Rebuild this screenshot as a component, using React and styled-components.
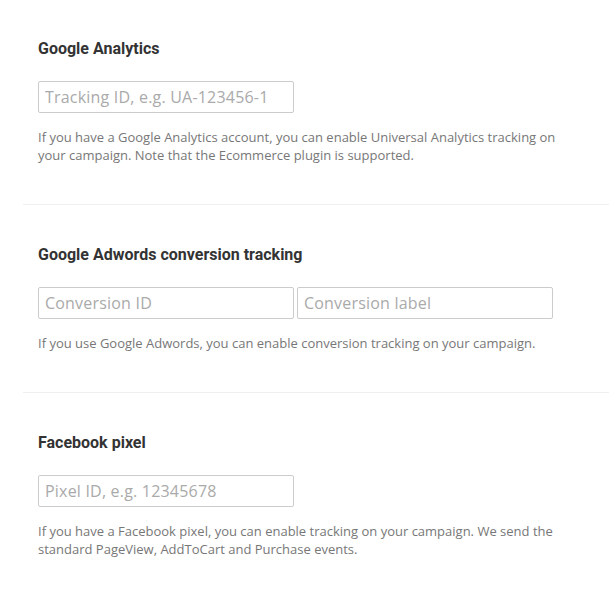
import React from 'react';
import styled, { createGlobalStyle } from 'styled-components';

const GlobalStyle = createGlobalStyle`
  body {
    margin: 0;
    background: #fff;
    font-family: "Open Sans", sans-serif;
  }
`;

const Page = styled.div`
  width: 609px;
  padding-left: 23px;
  box-sizing: border-box;
`;

const Section = styled.section`
  padding: 39px 0 40px 15px;
  border-bottom: ${(p) => (p.$last ? 'none' : '1px solid #efefef')};

  &:first-of-type {
    padding-top: 38px;
  }
`;

const Heading = styled.h3`
  margin: 0 0 21px;
  font-family: Roboto, sans-serif;
  font-weight: 700;
  font-size: 16px;
  line-height: 22px;
  color: #333;
`;

const InputRow = styled.div`
  display: flex;
  gap: 3px;
  margin-bottom: 15px;
`;

const Input = styled.input`
  width: 256px;
  height: 32px;
  box-sizing: border-box;
  border: 1px solid #ccc;
  border-radius: 2px;
  padding: 0 6px;
  font-family: "Open Sans", sans-serif;
  font-size: 16px;
  letter-spacing: 0.2px;
  color: #333;
  outline: none;

  &::placeholder {
    color: #aaa;
  }
`;

const Help = styled.p`
  margin: 0;
  width: 530px;
  font-size: 13px;
  line-height: 18px;
  color: #777;
`;

export default function App() {
  return (
    <Page>
      <GlobalStyle />
      <Section>
        <Heading>Google Analytics</Heading>
        <InputRow>
          <Input placeholder="Tracking ID, e.g. UA-123456-1" />
        </InputRow>
        <Help>
          If you have a Google Analytics account, you can enable Universal Analytics tracking on
          your campaign. Note that the Ecommerce plugin is supported.
        </Help>
      </Section>
      <Section>
        <Heading>Google Adwords conversion tracking</Heading>
        <InputRow>
          <Input placeholder="Conversion ID" />
          <Input placeholder="Conversion label" />
        </InputRow>
        <Help>If you use Google Adwords, you can enable conversion tracking on your campaign.</Help>
      </Section>
      <Section $last>
        <Heading>Facebook pixel</Heading>
        <InputRow>
          <Input placeholder="Pixel ID, e.g. 12345678" />
        </InputRow>
        <Help>
          If you have a Facebook pixel, you can enable tracking on your campaign. We send the
          standard PageView, AddToCart and Purchase events.
        </Help>
      </Section>
    </Page>
  );
}
